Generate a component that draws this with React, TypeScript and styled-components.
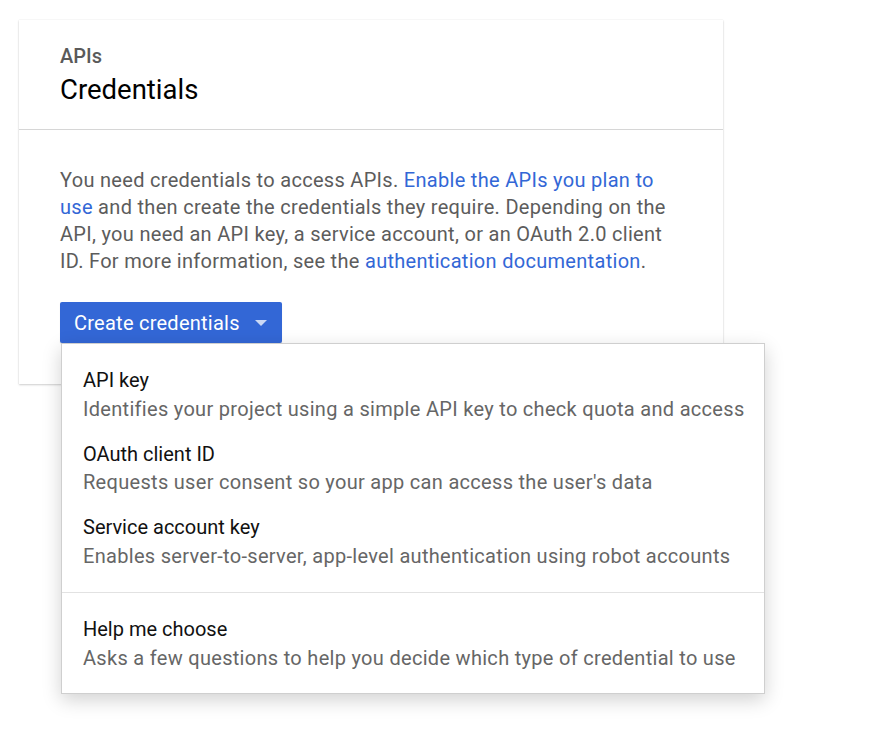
import styled, { createGlobalStyle } from 'styled-components'

const GlobalStyle = createGlobalStyle`
	body {
		margin: 0;
		background: #fff;
		font-family: Roboto, "Liberation Sans", Arial, sans-serif;
	}
`

const Page = styled.div`
	padding: 20px 0 0 19px;
	height: 752px;
	box-sizing: border-box;
`

const Card = styled.div`
	width: 704px;
	background: #fff;
	box-shadow: 0 1px 2px rgba(0, 0, 0, 0.18), 0 0 1px rgba(0, 0, 0, 0.12);
`

const CardHeader = styled.div`
	padding: 22px 41px 21px;
	border-bottom: 1px solid #d6d6d6;
`

const Overline = styled.div`
	font-size: 20px;
	line-height: 28px;
	font-weight: 500;
	color: #5a5a5a;
`

const Title = styled.h1`
	margin: 0;
	padding-top: 1px;
	font-size: 27.5px;
	line-height: 37px;
	font-weight: 400;
	color: #000;
`

const CardBody = styled.div`
	padding: 37px 41px 41px;
`

const Intro = styled.p`
	margin: 0 0 27px;
	font-size: 20px;
	letter-spacing: 0.3px;
	line-height: 27px;
	color: #5c5c5c;
`

const Link = styled.a`
	color: #3367d6;
	text-decoration: none;
`

const MenuAnchor = styled.div`
	position: relative;
	display: inline-block;
`

const DropButton = styled.button`
	display: flex;
	align-items: center;
	gap: 15px;
	height: 41px;
	padding: 0 15px 0 14px;
	border: none;
	border-radius: 2px;
	background: #3367d6;
	color: #fff;
	font-family: inherit;
	font-size: 20px;
	letter-spacing: 0.25px;
	box-shadow: 0 1px 1px rgba(0, 0, 0, 0.15);
`

const Caret = styled.span`
	width: 0;
	height: 0;
	border-left: 6px solid transparent;
	border-right: 6px solid transparent;
	border-top: 6px solid rgba(255, 255, 255, 0.75);
`

const Menu = styled.div`
	position: absolute;
	top: 100%;
	left: 1px;
	width: 704px;
	box-sizing: border-box;
	background: #fff;
	border: 1px solid #cfcfcf;
	box-shadow: 0 6px 18px rgba(0, 0, 0, 0.18);
	z-index: 2;
`

const MenuSection = styled.div<{ $divided?: boolean }>`
	padding: 14px 0 13px;
	border-top: ${(p) => (p.$divided ? '1px solid #e2e2e2' : 'none')};
`

const MenuItem = styled.div`
	padding: 8px 21px;
	font-size: 20px;
	letter-spacing: 0.3px;
	line-height: 28.8px;
	white-space: nowrap;
`

const ItemTitle = styled.div`
	color: #111;
	letter-spacing: 0;
`

const ItemDesc = styled.div`
	color: #666;
`

const items = [
	{ title: 'API key', desc: 'Identifies your project using a simple API key to check quota and access' },
	{ title: 'OAuth client ID', desc: "Requests user consent so your app can access the user's data" },
	{ title: 'Service account key', desc: 'Enables server-to-server, app-level authentication using robot accounts' },
]

const App = () => {
	return (
		<>
			<GlobalStyle />
			<Page>
				<Card>
					<CardHeader>
						<Overline>APIs</Overline>
						<Title>Credentials</Title>
					</CardHeader>
					<CardBody>
						<Intro>
							You need credentials to access APIs. <Link href="#">Enable the APIs you plan to use</Link> and
							then create the credentials they require. Depending on the API, you need an API key, a service
							account, or an OAuth 2.0 client ID. For more information, see the{' '}
							<Link href="#">authentication documentation</Link>.
						</Intro>
						<MenuAnchor>
							<DropButton>
								Create credentials
								<Caret />
							</DropButton>
							<Menu>
								<MenuSection>
									{items.map((it) => (
										<MenuItem key={it.title}>
											<ItemTitle>{it.title}</ItemTitle>
											<ItemDesc>{it.desc}</ItemDesc>
										</MenuItem>
									))}
								</MenuSection>
								<MenuSection $divided>
									<MenuItem>
										<ItemTitle>Help me choose</ItemTitle>
										<ItemDesc>Asks a few questions to help you decide which type of credential to use</ItemDesc>
									</MenuItem>
								</MenuSection>
							</Menu>
						</MenuAnchor>
					</CardBody>
				</Card>
			</Page>
		</>
	)
}

export default App
